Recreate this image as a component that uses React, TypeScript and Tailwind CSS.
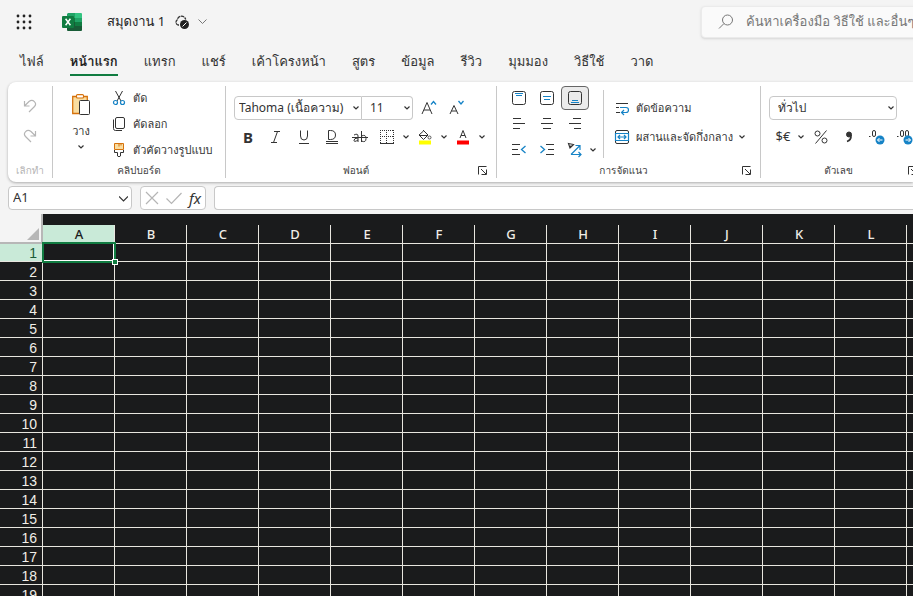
import type { ReactNode } from "react";

const columns = ["A", "B", "C", "D", "E", "F", "G", "H", "I", "J", "K", "L", "M"];
const rows = Array.from({ length: 19 }, (_, i) => i + 1);
const tabs = ["ไฟล์", "หน้าแรก", "แทรก", "แชร์", "เค้าโครงหน้า", "สูตร", "ข้อมูล", "รีวิว", "มุมมอง", "วิธีใช้", "วาด"];

function Icon({ size = 16, className = "", children }: { size?: number; className?: string; children: ReactNode }) {
  return (
    <svg
      width={size}
      height={size}
      viewBox={`0 0 ${size} ${size}`}
      fill="none"
      stroke="currentColor"
      strokeWidth="1"
      className={`shrink-0 ${className}`}
      aria-hidden="true"
    >
      {children}
    </svg>
  );
}

function Chevron() {
  return (
    <svg width="6" height="4" viewBox="0 0 6 4" fill="none" stroke="currentColor" strokeWidth="1.2" className="shrink-0" aria-hidden="true">
      <path d="M.5 .5 3 3 5.5 .5" />
    </svg>
  );
}

function Tool({ label, children, className = "w-7" }: { label: string; children: ReactNode; className?: string }) {
  return (
    <button type="button" aria-label={label} className={`flex h-6 items-center justify-center ${className}`}>
      {children}
    </button>
  );
}

function SplitTool({ label, children }: { label: string; children: ReactNode }) {
  return (
    <div className="flex">
      <Tool label={label} className="w-[26px]">{children}</Tool>
      <Tool label={`${label} ตัวเลือก`} className="w-3"><Chevron /></Tool>
    </div>
  );
}

function Group({ label, launcher = false, muted = false, className, children }: { label: string; launcher?: boolean; muted?: boolean; className: string; children: ReactNode }) {
  return (
    <section className={`flex shrink-0 flex-col border-r border-[#c8c8c8] ${className}`}>
      <div className="flex h-[76px]">{children}</div>
      <div className="flex h-4 items-center">
        <span className={`h-3 flex-1 overflow-hidden text-center text-[10px] leading-3 ${muted ? "text-[#b5b5b5]" : "text-[#424242]"} ${launcher ? "pl-3" : ""}`}>{label}</span>
        {launcher && (
          <button type="button" aria-label={`ตัวเลือก${label}`} className="mr-1.5 flex h-4 w-4 items-center justify-center">
            <Icon size={9}>
              <path d="M.5 8.500V.5h8M3 3l5 5M8.500 3.500v5h-5" />
            </Icon>
          </button>
        )}
      </div>
    </section>
  );
}

function Combo({ label, value, className }: { label: string; value: string; className: string }) {
  return (
    <div className={`relative h-6 border-[#c8c8c8] ${className}`}>
      <select aria-label={label} className="h-full w-full appearance-none bg-transparent pr-3 outline-none">
        <option>{value}</option>
      </select>
      <span className="pointer-events-none absolute inset-y-0 right-0.5 flex items-center"><Chevron /></span>
    </div>
  );
}

export default function App() {
  return (
    <div className="flex h-screen flex-col overflow-hidden bg-[#f4f4f4] font-['Noto_Sans','Loma',sans-serif] text-[12px] text-[#333]">
      <header className="flex h-11 shrink-0 items-center pl-2">
        <button type="button" aria-label="แอป" className="flex h-8 w-8 items-center justify-center">
          <svg width="16" height="16" viewBox="0 0 16 16" fill="#222" aria-hidden="true">
            {[2, 8, 14].map((y) => [2, 8, 14].map((x) => <circle key={`${x}-${y}`} cx={x} cy={y} r="1.4" />))}
          </svg>
        </button>
        <svg width="20" height="18" viewBox="0 0 20 18" className="ml-[22px]" aria-hidden="true">
          <path fill="#21a366" d="M6 0h7v5H5V1z" />
          <path fill="#33c481" d="M13 0h6q1 0 1 1v4h-7z" />
          <path fill="#107c41" d="M5 5h8v4H5z" />
          <path fill="#21a366" d="M13 5h7v4h-7z" />
          <path fill="#185c37" d="M5 9h8v5H5z" />
          <path fill="#107c41" d="M13 9h7v4h-7z" />
          <path fill="#185c37" d="M5 13h15v4q0 1-1 1H6q-1 0-1-1z" />
          <rect y="3" width="12" height="12" rx="1" fill="#107c41" />
          <path d="M3.600 5.800 8.400 12.200M8.400 5.800 3.600 12.200" stroke="#fff" strokeWidth="1.5" />
        </svg>
        <h1 className="ml-[25px] w-[59px] whitespace-nowrap text-[13px] text-[#242424]">สมุดงาน 1</h1>
        <button type="button" aria-label="สถานะการบันทึก" className="ml-2 flex h-6 items-center gap-2">
          <svg width="16" height="15" viewBox="0 0 16 15" fill="none" stroke="#333" aria-hidden="true">
            <path d="M5 10H4A3 3 0 0 1 3.300 4.700 4.300 4.300 0 0 1 11.700 4.500" strokeDasharray="3.500 .6" strokeWidth="1.300" />
            <circle cx="10.500" cy="9.500" r="4.500" fill="#222" stroke="none" />
            <path d="m8.500 11.500 4-4" stroke="#fff" />
          </svg>
          <svg width="9" height="6" viewBox="0 0 9 6" fill="none" stroke="#777" aria-hidden="true"><path d="M.5 .5 4.500 4.500 8.500 .5" /></svg>
        </button>
        <div className="flex-1" />
        <label className="-mr-40 flex h-8 w-[372px] shrink-0 items-center gap-3 rounded border border-[#ebebeb] bg-[#fafafa] pl-4 text-[#777] shadow-sm">
          <Icon size={16}><circle cx="9.500" cy="6" r="5" /><path d="M6 9.500 1 14.500" /></Icon>
          <input aria-label="ค้นหา" placeholder="ค้นหาเครื่องมือ วิธีใช้ และอื่นๆ" className="w-full bg-transparent text-[13px] outline-none placeholder:text-[#777]" />
        </label>
      </header>

      <nav className="flex h-[38px] shrink-0 items-start gap-[26px] pl-5 text-[13px]">
        {tabs.map((tab, i) => (
          <button key={tab} type="button" className={`h-8 shrink-0 whitespace-nowrap border-b-2 pt-1.5 ${i === 1 ? "border-[#107c41] font-bold text-[#242424]" : "border-transparent"}`}>
            {tab}
          </button>
        ))}
      </nav>

      <main className="flex min-h-0 flex-1 flex-col">
        <div className="ml-2 flex shrink-0 overflow-hidden rounded-l-lg bg-white py-1 shadow-[0_1px_3px_rgba(0,0,0,0.3)]">
          <Group label="เลิกทำ" muted className="w-[45px]">
            <div className="flex w-full flex-col items-center gap-1.5 pt-2 text-[#b5b5b5]">
              <Tool label="เลิกทำ"><Icon size={14}><path d="M1.500 2v5h5M1.500 7 6 2.500C10-.5 14.500 4 11.500 7.500L6 13" strokeWidth="1.200" /></Icon></Tool>
              <Tool label="ทำซ้ำ"><Icon size={14}><path d="M12.500 2v5h-5M12.500 7 8 2.500C4-.5-.5 4 2.500 7.500L8 13" strokeWidth="1.200" /></Icon></Tool>
            </div>
          </Group>

          <Group label="คลิปบอร์ด" className="w-[173px]">
            <button type="button" className="ml-2 flex w-10 flex-col items-center pt-2">
              <svg width="18" height="21" viewBox="0 0 18 21" fill="none" aria-hidden="true">
                <path d="M.7 2.500h14.600v17H.7z" fill="#f9dda0" stroke="#d6720c" strokeWidth="1.300" />
                <rect x="4.500" y=".6" width="7" height="3.400" rx="1" fill="#fff" stroke="#d6720c" strokeWidth="1.100" />
                <rect x="7.500" y="6.500" width="10" height="14" rx="1" fill="#fff" stroke="#333" />
              </svg>
              <span className="mt-1.5 mb-1 text-[11px] leading-5">วาง</span>
              <Chevron />
            </button>
            <div className="ml-2.5 flex flex-col gap-0.5 whitespace-nowrap text-[11px]">
              <button type="button" className="flex h-6 items-center gap-1.5">
                <Icon><path d="M4.500 1 10 11M11.500 1 6 11" /><g stroke="#1683c6" strokeWidth="1.200"><circle cx="4.500" cy="12.500" r="2" /><circle cx="11.500" cy="12.500" r="2" /></g></Icon>ตัด
              </button>
              <button type="button" className="flex h-6 items-center gap-1.5">
                <Icon><rect x="4.500" y="1.500" width="9" height="11" rx="1.500" /><path d="M2.500 3.500v9q0 2 2 2H11" /></Icon>คัดลอก
              </button>
              <button type="button" className="flex h-6 items-center gap-1.5">
                <Icon><path d="M3.500 1.500h9v6h-9z" fill="#f9dda0" stroke="#d6720c" /><path d="M8 1.500v3M10 1.500v2" stroke="#d6720c" /><path d="M3.500 8v2.500h3V14q1.500 1.500 3 0v-3.500h3V8" /></Icon>ตัวคัดวางรูปแบบ
              </button>
            </div>
          </Group>

          <Group label="ฟอนต์" launcher className="w-[271px]">
            <div className="ml-2 flex flex-col gap-[5px] pt-2.5">
              <div className="flex items-center">
                <Combo label="ฟอนต์" value="Tahoma (เนื้อความ)" className="w-32 rounded-l border pl-1" />
                <Combo label="ขนาดฟอนต์" value="11" className="w-[51px] rounded-r border-y border-r pl-2" />
                <Tool label="เพิ่มขนาด" className="ml-0.5 w-7"><Icon><path d="M1 14 6 2.500 11 14M3 10h6" /><path d="m10 4.500 2.500-3 2.500 3" stroke="#1683c6" strokeWidth="1.300" /></Icon></Tool>
                <Tool label="ลดขนาด"><Icon><path d="M1 14 5 5.500 9 14M2.500 11h5" /><path d="m9.500 1 2.500 3 2.500-3" stroke="#1683c6" strokeWidth="1.300" /></Icon></Tool>
              </div>
              <div className="flex">
                <Tool label="ตัวหนา"><b className="text-[15px]">B</b></Tool>
                <Tool label="ตัวเอียง"><Icon><path d="M6 2.500h6M3 13.500h6M9.500 2.500l-4 11" /></Icon></Tool>
                <Tool label="ขีดเส้นใต้"><Icon><path d="M4.500 1.500V7q0 4 3.500 4t3.500-4V1.500M3 14.500h10" /></Icon></Tool>
                <Tool label="ขีดเส้นใต้คู่"><Icon><path d="M4.500 1.500h2q5 0 5 4.500t-5 4.500h-2zM2 12.500h12M2 14.500h12" /></Icon></Tool>
                <Tool label="ขีดทับ"><Icon><path d="M0 8.500h16M2 6q4-2 4 1v6M6 9q-4 0-4 2.300T6 11M9.500 2v11M9.500 7q4.500-2 4.500 2.500t-4.500 2.500" /></Icon></Tool>
                <SplitTool label="เส้นขอบ"><Icon size={14}><path d="M0 .5h14M.5 0v13M13.500 0v13M6.500 0v13M0 6.500h14" strokeDasharray="1 1" shapeRendering="crispEdges" /><path d="M0 13.500h14" /></Icon></SplitTool>
                <SplitTool label="สีเติม"><Icon><path d="m6 1 5 5-4.500 4.500L2 6l4.500-4M3 6.500h7.500" /><circle cx="12.500" cy="8.500" r="1.500" stroke="#555" /><path d="M4 13.500h8" stroke="#ff0" strokeWidth="4" strokeLinecap="square" /></Icon></SplitTool>
                <SplitTool label="สีฟอนต์"><Icon><path d="M5 9 8 1.500 11 9M6 6.500h4" /><path d="M4 13.500h8" stroke="#f00" strokeWidth="4" strokeLinecap="square" /></Icon></SplitTool>
              </div>
            </div>
          </Group>

          <Group label="การจัดแนว" launcher className="w-[264px]">
            <div className="ml-2 grid w-[98px] grid-cols-[28px_28px_28px_10px] content-start gap-y-0.5">
              <Tool label="ชิดบน"><Icon><rect x="1.500" y="1.500" width="13" height="13" rx="2" /><path d="M4 3.500h8M5 5.500h6" stroke="#1683c6" /></Icon></Tool>
              <Tool label="กึ่งกลางแนวตั้ง"><Icon><rect x="1.500" y="1.500" width="13" height="13" rx="2" /><path d="M4 6.500h8M5 9.500h6" stroke="#1683c6" /></Icon></Tool>
              <Tool label="ชิดล่าง" className="w-7 rounded border border-[#666] bg-[#ebebeb]"><Icon><rect x="1.500" y="1.500" width="13" height="13" rx="2" /><path d="M5 10.500h6M4 12.500h8" stroke="#1683c6" /></Icon></Tool>
              <span />
              <Tool label="ชิดซ้าย"><Icon><path d="M2 2.500h8M2 7.500h12M2 12.500h7" /></Icon></Tool>
              <Tool label="กึ่งกลาง"><Icon><path d="M4 2.500h8M2 7.500h12M4 12.500h8" /></Icon></Tool>
              <Tool label="ชิดขวา"><Icon><path d="M6 2.500h8M2 7.500h12M7 12.500h7" /></Icon></Tool>
              <span />
              <Tool label="ลดการเยื้อง"><Icon><path d="M1 2.500h8M1 7.500h6M1 12.500h8" /><path d="m14.500 4-4 3.500 4 3.500" stroke="#1683c6" strokeWidth="1.300" /></Icon></Tool>
              <Tool label="เพิ่มการเยื้อง"><Icon><path d="M7 2.500h8M9 7.500h6M7 12.500h8" /><path d="m1.500 4 4 3.500-4 3.500" stroke="#1683c6" strokeWidth="1.300" /></Icon></Tool>
              <Tool label="การวางแนว"><Icon><path d="m1.500 1.500 5 1-3.500 3.500zM3 4l2 .5" strokeWidth="1.200" /><path d="M4 12.500 13 3.500M8.500 3.500H13V8M4 12.500h10M11.500 10l2.500 2.500-2.500 2.500" stroke="#1683c6" strokeWidth="1.200" /></Icon></Tool>
              <Tool label="ตัวเลือกการวางแนว" className="w-2"><Chevron /></Tool>
            </div>
            <div className="mt-1 h-[68px] w-px bg-[#c8c8c8]" />
            <div className="ml-2.5 flex flex-col gap-[5px] whitespace-nowrap pt-2.5 text-[11px]">
              <button type="button" className="flex h-6 items-center gap-1.5"><Icon><path d="M2 3.500h12M2 7.500h3M2 12.500h4" /><path d="M6 7.500h6q2.500 0 2.500 2.500t-2.500 2.500H8M10 10l-2.500 2.500L10 15" stroke="#1683c6" strokeWidth="1.200" /></Icon>ตัดข้อความ</button>
              <button type="button" className="flex h-6 items-center gap-1.5"><Icon><path d="M1.500 4.500V3q0-1.500 1.500-1.500h10q1.500 0 1.500 1.500v1.500M1.500 11.500V13q0 1.500 1.500 1.500h10q1.500 0 1.500-1.500v-1.500" /><path d="M1.500 4.500h13v7h-13zM4 8h8M6 6 4 8l2 2M10 6l2 2-2 2" stroke="#1683c6" strokeWidth="1.200" /></Icon>ผสานและจัดกึ่งกลาง<Chevron /></button>
            </div>
          </Group>

          <Group label="ตัวเลข" launcher className="w-[166px]">
            <div className="ml-2 flex flex-col gap-[5px] pt-2.5">
              <Combo label="รูปแบบตัวเลข" value="ทั่วไป" className="w-32 rounded border pl-2" />
              <div className="flex">
                <Tool label="สกุลเงิน" className="w-[26px]"><span className="pl-0.5 text-[13px]">$€</span></Tool>
                <Tool label="ตัวเลือกสกุลเงิน" className="w-3"><Chevron /></Tool>
                <Tool label="เปอร์เซ็นต์"><Icon><circle cx="4.500" cy="4.500" r="2.500" /><circle cx="11.500" cy="11.500" r="2.500" /><path d="M13.500 1.500 2.500 14.500" /></Icon></Tool>
                <Tool label="จุลภาค"><Icon><circle cx="8" cy="5.500" r="2.500" fill="currentColor" /><path d="M10 6q.5 5-4 6.500" strokeWidth="1.600" /></Icon></Tool>
                <Tool label="เพิ่มทศนิยม"><Icon><path d="M0 7.500h1.500" /><rect x="3.500" y="1.500" width="3" height="6" rx="1.500" /><circle cx="11" cy="11" r="4.500" fill="#1683c6" stroke="none" /><path d="M13.500 11h-5M10.500 9l-2 2 2 2" stroke="#fff" /></Icon></Tool>
                <Tool label="ลดทศนิยม"><Icon><path d="M0 7.500h1.500" /><rect x="3.500" y="1.500" width="3" height="6" rx="1.500" /><rect x="8.500" y="1.500" width="3" height="6" rx="1.500" /><circle cx="11" cy="11" r="4.500" fill="#1683c6" stroke="none" /><path d="M8.500 11h5M11.500 9l2 2-2 2" stroke="#fff" /></Icon></Tool>
              </div>
            </div>
          </Group>
        </div>

        <div className="flex shrink-0 gap-2 pt-1 pb-1 pl-2">
          <div className="flex h-6 w-[124px] items-center rounded border border-[#c8c8c8] bg-white pr-[3px]">
            <input aria-label="กล่องชื่อ" defaultValue="A1" className="w-full min-w-0 bg-transparent pl-1 text-[13px] outline-none" />
            <button type="button" aria-label="รายชื่อ"><Icon size={9}><path d="M0 2.500 4.500 7 9 2.500" strokeWidth="1.200" /></Icon></button>
          </div>
          <div className="flex h-6 w-[66px] items-center justify-between rounded border border-[#c8c8c8] bg-white px-1 text-[#b5b5b5]">
            <button type="button" aria-label="ยกเลิก"><Icon size={14}><path d="m1 1 12 12M13 1 1 13" strokeWidth="1.200" /></Icon></button>
            <button type="button" aria-label="ตกลง"><Icon><path d="m.5 8.500 5 5L15.500 3" strokeWidth="1.200" /></Icon></button>
            <button type="button" aria-label="แทรกฟังก์ชัน" className="text-[15px] leading-5 text-[#333] italic">fx</button>
          </div>
          <input aria-label="แถบสูตร" className="h-6 min-w-0 flex-1 rounded-l border border-r-0 border-[#c8c8c8] bg-white px-2 outline-none" />
        </div>

        <div className="min-h-0 flex-1 overflow-hidden bg-[#1a1b1c]">
          <table className="w-max table-fixed border-separate border-spacing-0 text-[13px] leading-4 text-[#f0eee8]">
            <colgroup>
              <col className="w-[43px]" />
              {columns.map((c) => <col key={c} className="w-[72px]" />)}
            </colgroup>
            <thead>
              <tr className="h-[11px]">
                <td rowSpan={2} className="border-r-2 border-b-2 border-[#b7b7b7] bg-[#f4f4f4] p-0 pr-0.5 pb-0.5 align-bottom">
                  <svg width="12" height="12" viewBox="0 0 12 12" className="ml-auto" aria-hidden="true"><path d="M12 0v12H0z" fill="#b7b7b7" /></svg>
                </td>
                <td colSpan={columns.length} className="p-0" />
              </tr>
              <tr className="h-[19px]">
                {columns.map((c, i) => (
                  <th key={c} scope="col" className={`border-r border-b border-[#e8e6df] p-0 pl-px font-medium ${i === 0 ? "bg-[#c9ead8] text-[#1a1b1c]" : ""}`}>{c}</th>
                ))}
              </tr>
            </thead>
            <tbody>
              {rows.map((r) => (
                <tr key={r} className={r === 1 ? "h-[18px]" : "h-[19px]"}>
                  <th scope="row" className={`border-r border-b border-[#e8e6df] p-0 pr-[5px] text-right align-bottom font-['Liberation_Sans',sans-serif] text-[14px] leading-4 font-normal ${r === 1 ? "bg-[#c9ead8] text-[#1a5c38]" : ""}`}>{r}</th>
                  {columns.map((c, i) => (
                    <td key={c} className="relative border-r border-b border-[#e8e6df] p-0">
                      {r === 1 && i === 0 && (
                        <span className="absolute -top-0.5 -right-0.5 -bottom-0.5 -left-px z-10 border-2 border-[#107c41]">
                          <span className="absolute inset-0 border-r border-b border-white" />
                          <span className="absolute -right-1 -bottom-1 h-1.5 w-1.5 border border-white bg-[#107c41]" />
                        </span>
                      )}
                    </td>
                  ))}
                </tr>
              ))}
            </tbody>
          </table>
        </div>
      </main>
    </div>
  );
}
